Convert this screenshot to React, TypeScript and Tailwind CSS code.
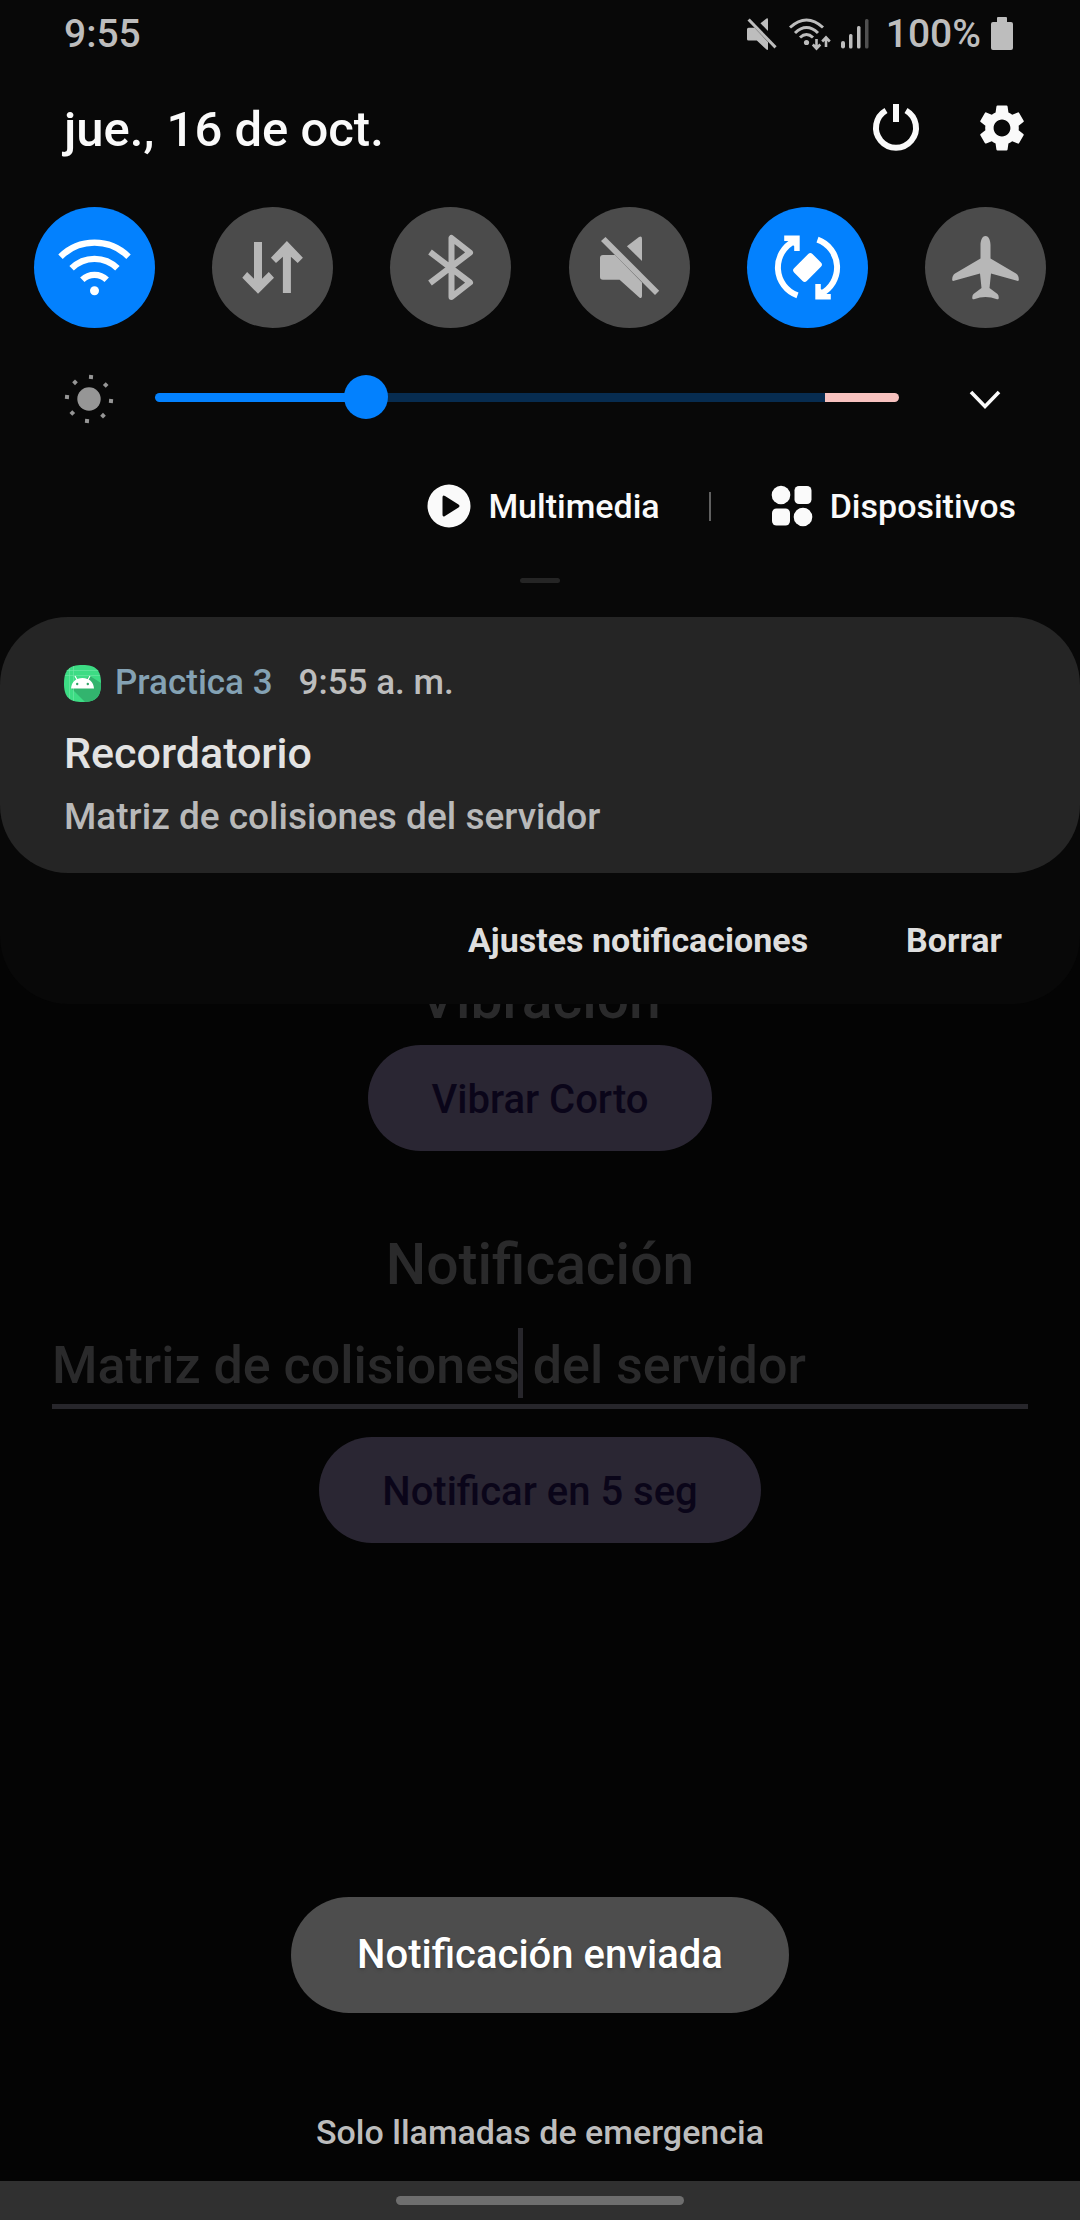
import type { ReactNode } from "react";
import { MdSettings } from "react-icons/md";

const MUTE_BODY =
  "M34 48 H46 L73 75.5 V89 Q73 91.5 70.6 90.7 L50.6 72.7 H34 Q31 72.7 31 70 V51 Q31 48 34 48Z";
const MUTE_TOP = "M57.9 39.3 L70 30 Q73 28.5 73 32 V54Z";
const MUTE_SLASH = "M36.5 30 L32 34 L86 88 L90.2 83.7Z";

function MuteShape() {
  return (
    <g fill="currentColor">
      <path d={MUTE_BODY} />
      <path d={MUTE_TOP} />
      <path d={MUTE_SLASH} />
    </g>
  );
}

function StatusBar() {
  return (
    <header className="flex h-[67px] items-center justify-between pl-16 pr-[67px] text-[39px] font-medium leading-[48px] text-[#bdbdbd]">
      <time>9:55</time>
      <div className="flex items-center">
        <svg viewBox="31 29 60 62" className="h-8 w-[30px]" preserveAspectRatio="none" aria-label="Silencio">
          <MuteShape />
        </svg>
        <svg viewBox="0 0 42 34" className="ml-3 h-[34px] w-[42px]" aria-label="Wi-Fi">
          <g fill="none" stroke="currentColor" strokeWidth="3">
            <path d="M1 10.5 Q17.500 -4.500 34 10.500" />
            <path d="M6 16 Q17.500 5 29 16" />
            <path d="M11 20.500 Q17.500 14.500 24 20.500" />
          </g>
          <circle cx="17.500" cy="25.500" r="2.600" fill="currentColor" />
          <g fill="none" stroke="currentColor" strokeWidth="2.600">
            <path d="M27.500 22 V31.500 M23.800 27.500 L27.500 31.500 L31.300 27.500" />
            <path d="M37 30 V20.500 M33.200 24.500 L37 20.500 L40.800 24.500" />
          </g>
        </svg>
        <svg viewBox="0 0 28 30" className="ml-[10px] h-[30px] w-7" aria-label="Señal móvil">
          <g fill="currentColor">
            <rect x="0" y="22" width="4" height="7.500" rx="2" />
            <rect x="8" y="15" width="3.500" height="14.500" rx="1.500" />
            <rect x="16" y="7" width="3.500" height="22.500" rx="1.500" />
          </g>
          <rect x="24" y="0" width="3.500" height="29.500" rx="1.500" fill="#505050" />
        </svg>
        <span className="ml-[17px]">100%</span>
        <svg viewBox="0 0 22 33" className="ml-[10px] h-[33px] w-[22px]" aria-label="Batería">
          <path
            fill="currentColor"
            d="M7 0 H15 Q16 0 16 1 V5 H20 Q22 5 22 7 V31 Q22 33 20 33 H2 Q0 33 0 31 V7 Q0 5 2 5 H6 V1 Q6 0 7 0Z"
          />
        </svg>
      </div>
    </header>
  );
}

function DateRow() {
  return (
    <div className="flex h-[121px] items-center justify-between pl-16 pr-[50px] text-[#fafafa]">
      <h1 className="pt-1 text-[49px] font-medium leading-[60px]">jue., 16 de oct.</h1>
      <div className="flex items-center gap-[50px]">
        <button type="button" aria-label="Apagar">
          <svg viewBox="0 0 56 56" className="size-14">
            <path d="M18 10.500 A20 20 0 1 0 38 10.500" fill="none" stroke="currentColor" strokeWidth="6" />
            <rect x="25" y="4" width="6" height="18" fill="currentColor" />
          </svg>
        </button>
        <button type="button" aria-label="Ajustes">
          <MdSettings className="size-14" />
        </button>
      </div>
    </div>
  );
}

const toggles: { label: string; on: boolean; icon: ReactNode }[] = [
  {
    label: "Wi-Fi",
    on: true,
    icon: (
      <g>
        <g fill="none" stroke="currentColor" strokeWidth="6.300">
          <path d="M26.500 49.700 A48.300 48.300 0 0 1 94.500 49.700" />
          <path d="M37.600 61.300 A32.300 32.300 0 0 1 83.400 61.300" />
          <path d="M48.300 72.700 A17.600 17.600 0 0 1 72.700 72.700" />
        </g>
        <circle cx="60.500" cy="83.700" r="4.500" fill="currentColor" />
      </g>
    ),
  },
  {
    label: "Datos móviles",
    on: false,
    icon: (
      <g fill="currentColor">
        <path d="M42 35 H50 V71.700 L56.800 65 L62 70.700 L46 86.700 L30.300 70.700 L35.100 65 L42 71.700Z" />
        <path d="M70.900 86 H78.900 V49.700 L85.700 56 L90.900 50.700 L74.900 34 L58.900 50.700 L64 56 L70.900 49.700Z" />
      </g>
    ),
  },
  {
    label: "Bluetooth",
    on: false,
    icon: (
      <path
        d="M40 76 L80 45.500 L61.500 31 V90 L80 75.500 L40 45"
        fill="none"
        stroke="currentColor"
        strokeWidth="6"
        strokeLinejoin="round"
      />
    ),
  },
  { label: "Silencio", on: false, icon: <MuteShape /> },
  {
    label: "Rotación automática",
    on: true,
    icon: (
      <g>
        <g fill="none" stroke="currentColor" strokeWidth="6">
          <path d="M50.500 88.300 A29.500 29.500 0 0 1 47.500 34" />
          <path d="M70.500 32.700 A29.500 29.500 0 0 1 73.500 87" />
        </g>
        <g fill="currentColor">
          <path d="M37.200 28.500 H52.700 V44 H47.200 V34 H37.200Z M42 34 H48 V40Z" />
          <path d="M83.800 92.500 H68.300 V77 H73.800 V87 H83.800Z M79 87 H73 V81Z" />
          <rect x="47.500" y="51.500" width="26" height="18" rx="3" transform="rotate(-45 60.500 60.500)" />
        </g>
      </g>
    ),
  },
  {
    label: "Modo avión",
    on: false,
    icon: (
      <path
        fill="currentColor"
        d="M60.500 29 C57 29 55.500 34 55.500 38 V51.500 L30 66.500 Q27 68.500 27.200 73 Q27.500 74.300 29 73.800 L55 66.500 L56.500 81 L48.500 87 Q47 88.500 47.300 91.500 Q48 92.600 49 92.300 Q55 90 60.500 90 Q66 90 72 92.300 Q73 92.600 73.700 91.500 Q74 88.500 72.500 87 L64.500 81 L66 66.500 L92 73.800 Q93.500 74.300 93.800 73 Q94 68.500 91 66.500 L65.500 51.500 V38 C65.500 34 64 29 60.500 29Z"
      />
    ),
  },
];

function QuickToggles() {
  return (
    <div className="flex justify-between px-[34px] pt-[19px]">
      {toggles.map((t) => (
        <button
          key={t.label}
          type="button"
          aria-label={t.label}
          aria-pressed={t.on}
          className={
            t.on
              ? "size-[121px] rounded-full bg-[#0381fe] text-white"
              : "size-[121px] rounded-full bg-[#4b4b4b] text-[#b7b7b7]"
          }
        >
          <svg viewBox="0 0 121 121" className="size-full">
            {t.icon}
          </svg>
        </button>
      ))}
    </div>
  );
}

const rays = [
  [2, -22, 5],
  [16.7, -14, 45],
  [22, 2, 5],
  [14, 16.7, 45],
  [-2, 22, 5],
  [-16.7, 14, 45],
  [-22, -2, 5],
  [-14, -16.7, 45],
];

function Brightness() {
  return (
    <div className="mt-[39px] flex h-[60px] items-center pl-16 pr-[70px]">
      <svg viewBox="-25 -25 50 50" className="mt-[3px] size-[50px]" aria-hidden="true">
        <circle r="11.700" fill="#969696" />
        {rays.map(([x, y, a]) => (
          <rect
            key={`${x},${y}`}
            x={x - 2}
            y={y - 2}
            width="4"
            height="4"
            fill="#969696"
            transform={`rotate(${a} ${x} ${y})`}
          />
        ))}
      </svg>
      <input
        type="range"
        min="0"
        max="100"
        defaultValue="27"
        aria-label="Brillo"
        className="ml-[41px] h-11 min-w-0 flex-1 appearance-none bg-transparent [&::-webkit-slider-runnable-track]:h-[9px] [&::-webkit-slider-runnable-track]:rounded-full [&::-webkit-slider-runnable-track]:bg-[linear-gradient(to_right,#0381fe_28%,#072c50_28%,#072c50_90%,#f7c2bf_90%)] [&::-webkit-slider-thumb]:-mt-[18px] [&::-webkit-slider-thumb]:size-11 [&::-webkit-slider-thumb]:appearance-none [&::-webkit-slider-thumb]:rounded-full [&::-webkit-slider-thumb]:bg-[#0381fe]"
      />
      <button type="button" aria-label="Mostrar más" className="ml-[61px] text-[#fafafa]">
        <svg viewBox="0 0 50 50" className="size-[50px]">
          <path d="M11 20 L25 34.500 L39 20" fill="none" stroke="currentColor" strokeWidth="3.600" />
        </svg>
      </button>
    </div>
  );
}

function PanelLinks() {
  return (
    <div className="mt-[57px] flex h-[44px] items-center justify-end pr-16 text-[34px] font-medium leading-[44px] text-[#fafafa]">
      <button type="button" className="flex items-center gap-[17px]">
        <svg viewBox="0 0 44 44" className="size-11" aria-hidden="true">
          <path
            fill="currentColor"
            fillRule="evenodd"
            d="M22 0.500 A21.500 21.500 0 1 0 22 43.500 A21.500 21.500 0 1 0 22 0.500Z M15.500 13.500 Q15.500 10.500 18 12 L31.500 20.500 Q33.500 22 31.500 23.500 L18 32 Q15.500 33.500 15.500 30.500Z"
          />
        </svg>
        Multimedia
      </button>
      <span className="ml-[49px] h-[29px] w-[2px] bg-[#606060]" />
      <button type="button" className="ml-[60px] flex items-center gap-[17px]">
        <svg viewBox="0 0 42 42" className="size-[42px]" aria-hidden="true">
          <g fill="currentColor">
            <circle cx="10" cy="10" r="9.300" />
            <rect x="23.500" y="1" width="17" height="18" rx="4.500" />
            <rect x="1" y="23.500" width="18" height="17" rx="4.500" />
            <circle cx="32" cy="32" r="9.300" />
          </g>
        </svg>
        Dispositivos
      </button>
    </div>
  );
}

function AppBadge() {
  return (
    <svg viewBox="0 0 37 37" className="size-[37px]" aria-hidden="true">
      <defs>
        <clipPath id="badge">
          <path d="M18.500 0 C32 0 37 5 37 18.500 C37 32 32 37 18.500 37 C5 37 0 32 0 18.500 C0 5 5 0 18.500 0Z" />
        </clipPath>
      </defs>
      <g clipPath="url(#badge)">
        <rect width="37" height="37" fill="#3ddc84" />
        <path d="M7 23 L21 37 H37 V18 L26 11Z" fill="#32b46e" />
        <path d="M5.500 0 V37 M9.500 0 V37 M0 5.500 H37 M0 10.500 H37" stroke="#74e8a8" strokeWidth="0.600" />
        <path d="M7 23.500 C7.500 17 12 13 18.500 13 C25 13 29.500 17 30 23.500Z" fill="#fff" />
        <path d="M11 11 L13.500 15.500 M26 11 L23.500 15.500" stroke="#fff" strokeWidth="1.200" />
        <circle cx="13.200" cy="19" r="1.200" fill="#32a468" />
        <circle cx="23.800" cy="19" r="1.200" fill="#32a468" />
      </g>
    </svg>
  );
}

function Notification() {
  return (
    <article className="rounded-[68px] bg-[#252525] px-16 pb-8 pt-11 font-medium">
      <div className="flex h-[44px] items-center text-[35px] leading-[44px]">
        <AppBadge />
        <span className="ml-[14px] text-[#84a2b4]">Practica 3</span>
        <span className="ml-[26px] text-[#bdbdbd]">9:55 a. m.</span>
      </div>
      <h2 className="mt-5 text-[43px] leading-[56px] text-[#e3e3e3]">Recordatorio</h2>
      <p className="mt-3 text-[37px] leading-[48px] text-[#b9b9b9]">Matriz de colisiones del servidor</p>
    </article>
  );
}

function ShadePanel() {
  return (
    <section className="relative z-10 rounded-b-[68px] bg-[#080808]">
      <StatusBar />
      <DateRow />
      <QuickToggles />
      <Brightness />
      <PanelLinks />
      <div className="mx-auto mb-[34px] mt-[50px] h-[5px] w-10 rounded-full bg-[#252525]" />
      <Notification />
      <div className="flex h-[131px] items-center justify-end gap-[98px] pr-[78px] pt-[2px] text-[34px] font-bold leading-[44px] text-[#dedede]">
        <button type="button">Ajustes notificaciones</button>
        <button type="button">Borrar</button>
      </div>
    </section>
  );
}

function PillButton({ children }: { children: ReactNode }) {
  return (
    <button
      type="button"
      className="h-[106px] rounded-full bg-[#2a2633] px-[63px] pt-1 text-[40px] font-medium leading-[48px] text-[#0a0519]"
    >
      {children}
    </button>
  );
}

function PracticeScreen() {
  return (
    <main className="flex flex-col items-center font-medium text-[#2a2a2b]">
      <h2 className="-mt-[40px] text-[57px] leading-[70px]">Vibración</h2>
      <div className="mt-[11px]">
        <PillButton>Vibrar Corto</PillButton>
      </div>
      <h2 className="mt-[79px] text-[57px] leading-[70px]">Notificación</h2>
      <div className="relative mt-[28px] w-full px-[52px]">
        <input
          type="text"
          aria-label="Texto de la notificación"
          defaultValue="Matriz de colisiones del servidor"
          className="h-[81px] w-full border-b-[5px] border-[#27262b] bg-transparent pb-[2px] text-[52px] leading-[64px] outline-none"
        />
        <span className="absolute left-[518px] top-0 h-[70px] w-[5px] bg-[#27262b]" />
      </div>
      <div className="mt-7">
        <PillButton>Notificar en 5 seg</PillButton>
      </div>
    </main>
  );
}

export default function App() {
  return (
    <div className="flex min-h-screen flex-col bg-[#040404] font-['Roboto',sans-serif]">
      <ShadePanel />
      <PracticeScreen />
      <footer className="mt-auto flex flex-col items-center font-medium">
        <div
          role="status"
          className="flex h-[116px] items-center rounded-full bg-[#4d4d4d] px-[66px] text-[40px] leading-[48px] text-white text-shadow-md"
        >
          Notificación enviada
        </div>
        <p className="mt-[97px] text-[34px] leading-[44px] text-[#bdbdbd]">Solo llamadas de emergencia</p>
        <div className="mt-[27px] flex h-[39px] w-full justify-center bg-[#303030] pt-[15px]">
          <span className="h-[9px] w-72 rounded-full bg-[#6e6e6e]" />
        </div>
      </footer>
    </div>
  );
}
